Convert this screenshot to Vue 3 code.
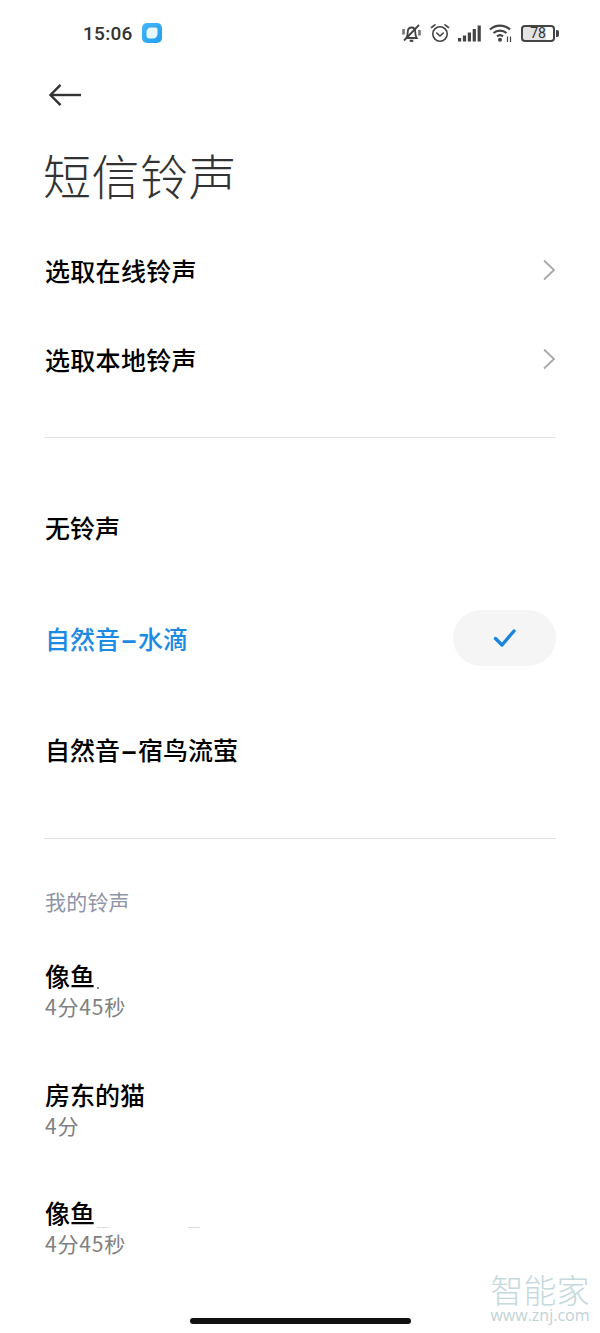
<template>
  <div class="page">
    <div class="status">
      <div class="status-left">
        <span class="time">15:06</span>
        <svg class="app-icon" width="20" height="20" viewBox="0 0 20 20">
          <defs>
            <linearGradient id="appBg" x1="0" y1="0" x2="1" y2="1">
              <stop offset="0" stop-color="#45b6f5" />
              <stop offset="1" stop-color="#1f9ff0" />
            </linearGradient>
          </defs>
          <rect width="20" height="20" rx="5" fill="url(#appBg)" />
          <path d="M9 4.500h4.500a2 2 0 0 1 2 2V11a4.500 4.500 0 0 1-4.500 4.500H7.500a3 3 0 0 1-3-3V9A4.500 4.500 0 0 1 9 4.500z" fill="#e8f6fe" />
        </svg>
      </div>
      <div class="status-right">
        <svg width="21" height="20" viewBox="0 0 21 20" fill="none" stroke="#444" stroke-width="1.800">
          <path d="M5.500 15c1-1.500 1.200-3 1.200-5.500 0-3 1.600-5 3.800-5s3.800 2 3.800 5c0 2.500 .3 4 1.400 5.500z" />
          <path d="M8.700 17.800h3.600" stroke-width="2.200" />
          <path d="M3 17.500 18 2" />
          <path d="M2.500 6v5.500M18.500 7v5.500" stroke-width="2.600" stroke="#777" />
        </svg>
        <svg width="20" height="20" viewBox="0 0 20 20" fill="none" stroke="#444" stroke-width="1.600">
          <circle cx="10" cy="11" r="7.200" />
          <path d="M6.800 10 10 13l3.200-3" stroke-linecap="round" />
          <path d="M1.500 4.500 5 1.800M18.500 4.500 15 1.800" stroke-linecap="round" />
        </svg>
        <svg width="23" height="17" viewBox="0 0 23 17" fill="#444">
          <rect x="0" y="13" width="3.200" height="3.500" />
          <rect x="4.900" y="10.500" width="3.200" height="6" />
          <rect x="9.800" y="7.500" width="3.200" height="9" />
          <rect x="14.700" y="4" width="3.200" height="12.500" />
          <rect x="19.600" y="0.500" width="3.200" height="16" />
        </svg>
        <svg width="24" height="20" viewBox="0 0 24 20" fill="none" stroke="#444" stroke-width="2.200">
          <path d="M1 6.500C6.500 1.200 15.500 1.200 21 6.500" />
          <path d="M4.500 10c3.600-3.200 9.400-3.200 13 0" />
          <path d="M8 13.300c1.800-1.500 4.200-1.500 6 0" />
          <circle cx="11" cy="16.800" r="2" fill="#444" stroke="none" />
          <path d="M18.500 13.500v5.500M21.500 13.500v5.500" stroke-width="1.200" />
        </svg>
        <div class="battery">
          <div class="battery-body"><span>78</span></div>
          <div class="battery-cap"></div>
        </div>
      </div>
    </div>

    <div class="back">
      <svg width="34" height="24" viewBox="0 0 34 24" fill="none" stroke="#333" stroke-width="2.400">
        <path d="M33 12H3" />
        <path d="M12.500 1.800 2.500 12l10 10.200" />
      </svg>
    </div>

    <h1 class="title">短信铃声</h1>

    <div v-for="item in links" :key="item" class="link-row">
      <span>{{ item }}</span>
      <svg width="14" height="22" viewBox="0 0 14 22" fill="none" stroke="#a8a8a8" stroke-width="1.800">
        <path d="M2 1.500 12 11 2 20.500" />
      </svg>
    </div>

    <div class="divider first"></div>

    <div class="tones">
      <div
        v-for="tone in tones"
        :key="tone.name"
        class="tone-row"
        :class="{ active: tone.active }"
      >
        <span class="tone-name">
          <template v-for="(part, i) in tone.name.split('-')" :key="part">
            <span v-if="i > 0" class="dash">-</span>{{ part }}
          </template>
        </span>
        <div v-if="tone.active" class="check-pill">
          <svg width="26" height="22" viewBox="0 0 26 22" fill="none" stroke="#1a85e0" stroke-width="3.400" stroke-linecap="round" stroke-linejoin="round">
            <path d="M3.500 11.500 10 18 22 4" />
          </svg>
        </div>
      </div>
    </div>

    <div class="divider second"></div>

    <div class="section-label">我的铃声</div>

    <div v-for="song in songs" :key="song.id" class="song">
      <div class="song-name">{{ song.name }}</div>
      <div class="song-time">{{ song.time }}</div>
    </div>

    <!-- leftovers of the blurred-out song titles -->
    <i class="speck dot"></i>
    <i class="speck dash-a"></i>
    <i class="speck dash-b"></i>

    <div class="watermark">
      <div class="wm-name">智能家</div>
      <div class="wm-url">www.znj.com</div>
    </div>
    <div class="home-bar"></div>
  </div>
</template>

<script setup>
const links = ['选取在线铃声', '选取本地铃声']

const tones = [
  { name: '无铃声', active: false },
  { name: '自然音-水滴', active: true },
  { name: '自然音-宿鸟流萤', active: false },
]

const songs = [
  { id: 1, name: '像鱼', time: '4分45秒' },
  { id: 2, name: '房东的猫', time: '4分' },
  { id: 3, name: '像鱼', time: '4分45秒' },
]
</script>

<style>
html,
body {
  margin: 0;
  background: #fff;
}
</style>

<style scoped>
.page {
  position: relative;
  width: 600px;
  height: 1333px;
  overflow: hidden;
  background: #fff;
  color: #000;
  font-family: "Noto Sans CJK SC", "Noto Sans", sans-serif;
}

.status {
  height: 68px;
  display: flex;
  justify-content: space-between;
  align-items: center;
  padding: 0 41px 2px 83px;
  box-sizing: border-box;
}

.status-left {
  display: flex;
  align-items: center;
  gap: 9px;
}

.time {
  font-family: Roboto, sans-serif;
  font-size: 19px;
  font-weight: 500;
  color: #333;
  letter-spacing: 0.3px;
}

.status-right {
  display: flex;
  align-items: center;
  gap: 8px;
}

.battery {
  display: flex;
  align-items: center;
}

.battery-body {
  width: 34px;
  height: 17px;
  box-sizing: border-box;
  border: 2px solid #444;
  border-radius: 4px;
  display: flex;
  align-items: center;
  justify-content: center;
  font-family: Roboto, sans-serif;
  font-size: 14px;
  font-weight: 400;
  color: #333;
  background: linear-gradient(90deg, #e4e4e4 78%, #fff 78%);
}

.battery-cap {
  width: 3px;
  height: 7px;
  margin-left: 1px;
  background: #444;
  border-radius: 0 2px 2px 0;
}

.back {
  height: 52px;
  box-sizing: border-box;
  padding: 2px 0 0 48px;
  display: flex;
  align-items: center;
}

.title {
  margin: 0;
  height: 105px;
  padding: 18px 0 0 43px;
  box-sizing: border-box;
  font-size: 48px;
  letter-spacing: 0.5px;
  line-height: 72px;
  font-weight: 300;
  color: #333;
}

.link-row {
  height: 89px;
  margin: 0 44px 0 45px;
  display: flex;
  justify-content: space-between;
  align-items: center;
  font-size: 25px;
  letter-spacing: 0.3px;
  font-weight: 500;
}

.divider {
  height: 1px;
  margin: 0 44px;
  background: #e4e4e4;
}

.divider.first {
  margin-top: 34px;
}

.tones {
  margin-top: 33px;
}

.tone-row {
  height: 111px;
  margin: 0 44px 0 45px;
  display: flex;
  justify-content: space-between;
  align-items: center;
  font-size: 25px;
  font-weight: 500;
}

.tone-row.active {
  color: #1a8ae4;
}

.tone-name {
  white-space: nowrap;
}

.dash {
  display: inline-block;
  width: 18px;
  text-align: center;
  font-weight: 700;
  transform: scaleX(1.9);
}

.check-pill {
  width: 103px;
  height: 56px;
  border-radius: 28px;
  background: #f5f5f5;
  display: flex;
  align-items: center;
  justify-content: center;
}

.divider.second {
  margin-top: 34px;
}

.section-label {
  margin: 46px 0 0 45px;
  height: 32px;
  line-height: 32px;
  font-size: 21px;
  letter-spacing: 0.2px;
  color: #8f94a8;
}

.song {
  height: 118.500px;
  padding-left: 45px;
  box-sizing: border-box;
}

.song-name {
  padding-top: 40px;
  line-height: 36px;
  font-size: 25px;
  font-weight: 500;
}

.song-time {
  margin-top: -1px;
  line-height: 28px;
  font-size: 21px;
  letter-spacing: 0.8px;
  color: #808080;
}

.speck {
  position: absolute;
  display: block;
}

.speck.dot {
  left: 97px;
  top: 987px;
  width: 2px;
  height: 2px;
  background: #8a8a8a;
}

.speck.dash-a,
.speck.dash-b {
  top: 1227px;
  width: 12px;
  height: 1px;
  background: #dcdcdc;
}

.speck.dash-a {
  left: 97px;
}

.speck.dash-b {
  left: 188px;
}

.watermark {
  position: absolute;
  right: 8px;
  top: 1270px;
  width: 104px;
  text-align: center;
  color: #c6d9dc;
}

.wm-name {
  font-size: 33px;
  line-height: 38px;
  font-weight: 300;
}

.wm-url {
  font-family: "Open Sans", sans-serif;
  font-size: 16px;
  line-height: 14px;
  white-space: nowrap;
  color: #c2d2d6;
}

.home-bar {
  position: absolute;
  left: 190px;
  top: 1318px;
  width: 221px;
  height: 6px;
  border-radius: 3px;
  background: #111;
}
</style>
